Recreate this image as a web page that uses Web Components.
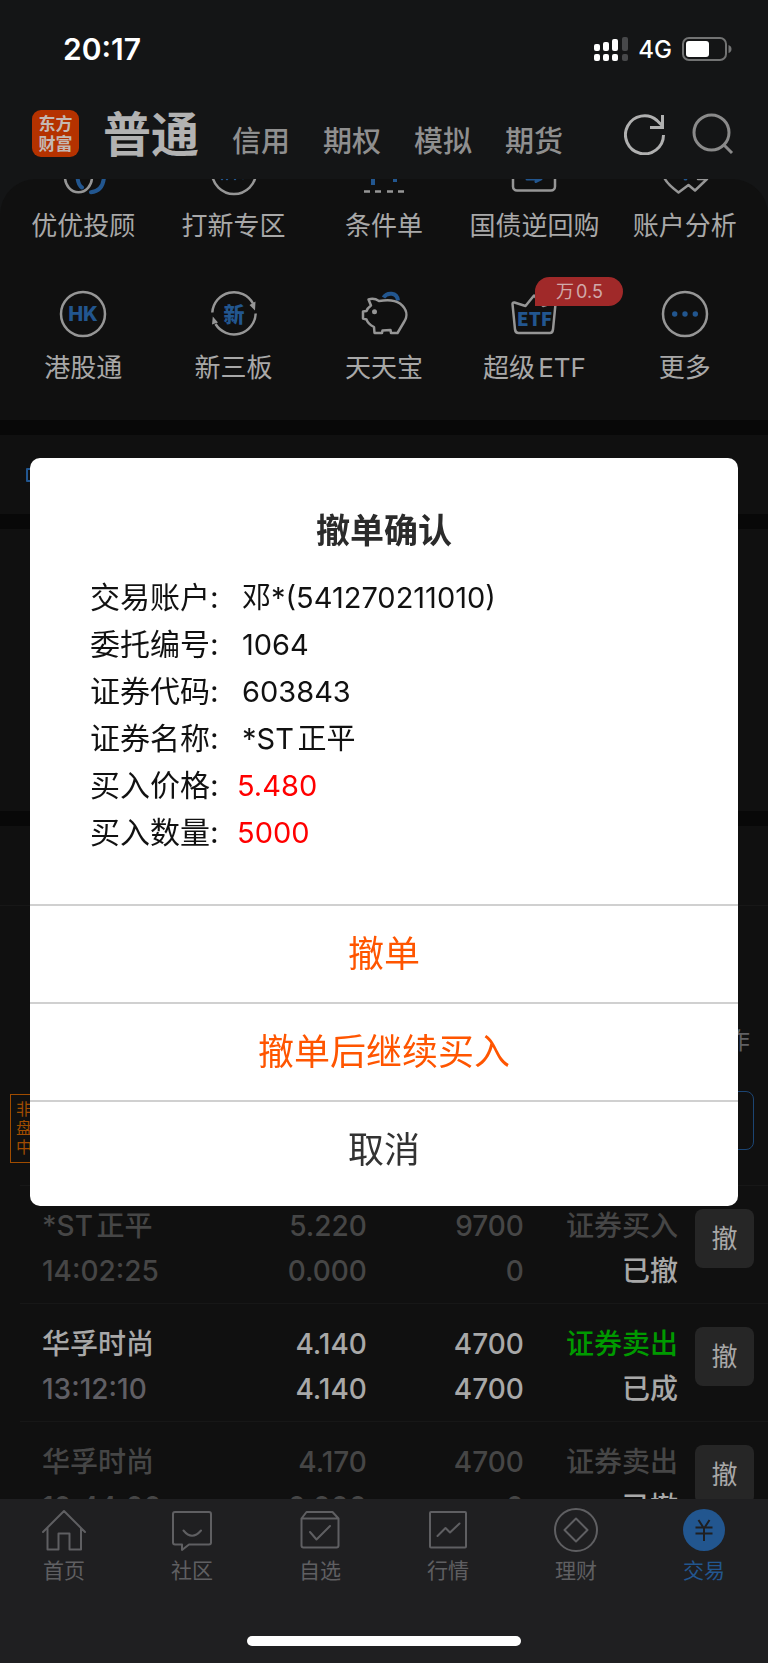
<!DOCTYPE html>
<html lang="zh-CN">
<head>
    <meta charset="UTF-8">
    <meta name="viewport" content="width=device-width, initial-scale=1.0">
    <title>撤单确认</title>
    <style>
        html, body {
            margin: 0;
            height: 100%;
            background: #101010;
        }
        body {
            font-family: Inter, "Noto Sans CJK SC", sans-serif;
            text-autospace: normal;
            --blue: #22568f;
            --text: #a8a8a8;
            --dim: #464646;
            --orange: #ff5500;
        }
        svg {
            display: block;
            fill: none;
            stroke: currentColor;
            stroke-width: 2;
            stroke-linecap: round;
            stroke-linejoin: round;
        }
        entry-item svg {
            stroke-width: 2.5;
            overflow: visible;
        }
        svg .blue {
            stroke: var(--blue);
        }
        svg .dot, svg text {
            fill: var(--blue);
            stroke: none;
        }
        svg .tip {
            fill: currentColor;
            stroke: none;
        }
    </style>
</head>
<body>
    <template id="app-shell-tpl">
        <style>
            :host {
                display: flex;
                flex-direction: column;
                height: 100vh;
                background: #141516;
            }
            main {
                flex: 1;
                min-height: 0;
                overflow: hidden;
                border-radius: 36px 36px 0 0;
                background: #101010;
            }
        </style>
        <slot name="top"></slot>
        <main><slot></slot></main>
        <slot name="bottom"></slot>
    </template>

    <template id="status-bar-tpl">
        <style>
            :host {
                display: flex;
                align-items: center;
                justify-content: space-between;
                box-sizing: border-box;
                height: 88px;
                padding: 10px 36px 0 63px;
                color: #fff;
            }
            time {
                font-size: 30px;
                font-weight: 600;
            }
            .right {
                display: flex;
                align-items: center;
                gap: 10px;
                font-size: 24px;
                font-weight: 500;
            }
            svg {
                display: block;
            }
        </style>
        <time>20:17</time>
        <div class="right">
            <svg width="34" height="24" fill="#fff">
                <rect x="0" y="7" width="6" height="7" rx="2"/>
                <rect x="9" y="5" width="6" height="9" rx="2"/>
                <rect x="18" y="2" width="6" height="12" rx="2"/>
                <rect x="28" y="0" width="6" height="14" rx="2" fill="#47484a"/>
                <rect x="0" y="17" width="6" height="7" rx="2"/>
                <rect x="9" y="17" width="6" height="7" rx="2"/>
                <rect x="18" y="17" width="6" height="7" rx="2"/>
                <rect x="28" y="17" width="6" height="7" rx="2" fill="#47484a"/>
            </svg>
            <span>4G</span>
            <svg width="50" height="24">
                <rect x="1" y="1" width="43" height="22" rx="6" fill="none" stroke="#727373" stroke-width="2"/>
                <rect x="4" y="4" width="23" height="16" rx="3" fill="#fff"/>
                <path d="M46.500 8q3 1 3 4t-3 4z" fill="#727373"/>
            </svg>
        </div>
    </template>

    <template id="app-header-tpl">
        <style>
            :host {
                display: flex;
                align-items: center;
                height: 91px;
                padding: 0 34px 0 32px;
                color: #8f8f8f;
            }
            .logo {
                display: grid;
                place-content: center;
                width: 47px;
                height: 47px;
                border-radius: 9px;
                background: #b53200;
                color: #c4b8b3;
                font-size: 17px;
                font-weight: 700;
                line-height: 20px;
            }
            nav {
                display: flex;
                align-items: baseline;
                flex: 1;
                gap: 33px;
                margin-left: 24px;
                padding-top: 9px;
                line-height: 60px;
            }
            a {
                color: inherit;
                font-size: 29px;
                font-weight: 500;
                text-decoration: none;
            }
            a.current {
                color: #b2b2b2;
                font-size: 48px;
                font-weight: 600;
            }
            .tools {
                display: flex;
                gap: 26px;
            }
            button {
                padding: 0;
                border: 0;
                background: none;
                color: #8a8a8a;
            }
            button.bright {
                color: #b0b0b0;
            }
            svg {
                display: block;
                fill: none;
                stroke: currentColor;
                stroke-width: 3;
            }
        </style>
        <div class="logo"><span>东方</span><span>财富</span></div>
        <nav>
            <a class="current" href="#normal">普通</a>
            <a href="#credit">信用</a>
            <a href="#option">期权</a>
            <a href="#mock">模拟</a>
            <a href="#futures">期货</a>
        </nav>
        <div class="tools">
            <button class="bright" type="button" aria-label="刷新">
                <svg width="42" height="42" viewBox="0 0 42 42"><path d="M39.500 22A19 19 0 1 1 33 7.500L38.500 13M38.500 2V14.500H26"/></svg>
            </button>
            <button type="button" aria-label="搜索">
                <svg width="42" height="42" viewBox="0 0 42 42"><circle cx="19.500" cy="19.500" r="17.500"/><path d="M31.500 31.500 40 40"/></svg>
            </button>
        </div>
    </template>

    <template id="entry-grid-tpl">
        <style>
            :host {
                display: grid;
                grid-template-columns: repeat(5, 1fr);
                row-gap: 47px;
                /* the list is scrolled a little, the first row is cut by the header */
                margin-top: -30px;
                padding: 0 8px 34px;
                color: #969696;
            }
        </style>
        <slot></slot>
    </template>

    <template id="entry-item-tpl">
        <style>
            :host {
                display: block;
                min-width: 0;
            }
            a {
                display: flex;
                flex-direction: column;
                align-items: center;
                gap: 13px;
                color: inherit;
                text-decoration: none;
            }
            .icon {
                position: relative;
            }
            .label {
                color: var(--text);
                font-size: 26px;
                line-height: 36px;
                white-space: nowrap;
            }
            ::slotted([slot="badge"]) {
                position: absolute;
                left: 24px;
                top: -14px;
                width: 88px;
                border-radius: 15px 15px 15px 0;
                background: #a02929;
                color: #d0a9a9;
                font-size: 18px;
                line-height: 29px;
                text-align: center;
            }
        </style>
        <a href="#entry">
            <span class="icon"><slot name="icon"></slot><slot name="badge"></slot></span>
            <span class="label"><slot></slot></span>
        </a>
    </template>

    <template id="page-block-tpl">
        <style>
            :host {
                display: block;
                box-sizing: border-box;
                border-top: 15px solid #080808;
                color: var(--blue);
            }
            :host([size="bar"]) {
                min-height: 94px;
                padding: 33px 26px 0;
            }
            :host([size="large"]) {
                min-height: 297px;
            }
        </style>
        <slot></slot>
    </template>

    <template id="order-table-tpl">
        <style>
            :host {
                display: block;
                padding: 108px 0 0 20px;
                border-top: 1px solid #171717;
            }
            table {
                width: 100%;
                border-collapse: collapse;
                table-layout: fixed;
                color: var(--dim);
                font-size: 28px;
                font-weight: 500;
                line-height: 45px;
            }
            th {
                padding: 0 18px 0 0;
                color: #606063;
                font-size: 24px;
                font-weight: 400;
                line-height: 54px;
                text-align: right;
            }
            td {
                height: 90px;
                padding: 18px 0 9px;
                border-bottom: 1px solid #171717;
                text-align: right;
                vertical-align: top;
                white-space: nowrap;
            }
            td:first-child {
                position: relative;
                padding-left: 22px;
                text-align: left;
            }
            td:last-child {
                padding: 23px 14px 0 0;
            }
            .c-num { width: 157px; }
            .c-act { width: 154px; }
            .c-btn { width: 90px; }
            .state, .done {
                color: var(--text);
            }
            .done .time {
                color: #605f65;
            }
            .done .side {
                color: #009a00;
            }
            button {
                width: 59px;
                height: 59px;
                padding: 0;
                border: 0;
                border-radius: 8px;
                background: #262626;
                color: var(--text);
                font: 400 26px/59px Inter, "Noto Sans CJK SC", sans-serif;
                vertical-align: top;
            }
            button.outline {
                border: 1px solid #1c4573;
                background: none;
            }
            .tag {
                position: absolute;
                left: -10px;
                top: 26px;
                width: 16px;
                padding: 5px;
                border: 1px solid #a04c00;
                color: #a04c00;
                font-size: 16px;
                font-weight: 400;
                line-height: 19px;
                white-space: normal;
            }
        </style>
        <table>
            <colgroup><col><col class="c-num"><col class="c-num"><col class="c-act"><col class="c-btn"></colgroup>
            <thead><tr><th colspan="5" scope="col">操作</th></tr></thead>
            <tbody>
                <tr>
                    <td><span class="tag">非盘中</span></td><td></td><td></td><td></td>
                    <td><button class="outline" type="button" aria-label="操作"></button></td>
                </tr>
            </tbody>
        </table>
    </template>

    <template id="tab-bar-tpl">
        <style>
            :host {
                display: block;
                padding-bottom: 17px;
                background: #1f1f21;
                color: #5f5f62;
            }
            nav {
                display: grid;
                grid-template-columns: repeat(6, 1fr);
                padding: 9px 0 52px;
            }
            .home {
                width: 274px;
                height: 10px;
                margin: 0 auto;
                border-radius: 5px;
                background: #fff;
            }
        </style>
        <nav><slot></slot></nav>
        <div class="home"></div>
    </template>

    <template id="tab-item-tpl">
        <style>
            :host {
                display: block;
            }
            a {
                display: flex;
                flex-direction: column;
                align-items: center;
                gap: 6px;
                color: inherit;
                font-size: 21px;
                line-height: 26px;
                text-decoration: none;
            }
            :host([active]) a {
                color: var(--blue);
            }
        </style>
        <a href="#tab"><slot name="icon"></slot><span><slot></slot></span></a>
    </template>

    <template id="confirm-dialog-tpl">
        <style>
            :host {
                position: fixed;
                inset: 0;
                display: flex;
                align-items: center;
                padding: 0 30px;
            }
            section {
                flex: 1;
                overflow: hidden;
                border-radius: 10px;
                background: #fff;
            }
            h1 {
                margin: 0;
                padding: 49px 0 19px;
                color: #2b2b2b;
                font-size: 34px;
                font-weight: 600;
                line-height: 48px;
                text-align: center;
            }
            dl {
                margin: 0;
                padding: 0 60px 48px;
                color: #111;
                line-height: 47px;
            }
            .row {
                display: flex;
                align-items: baseline;
            }
            dt {
                width: 152px;
                font-size: 30px;
                text-autospace: no-autospace;
            }
            dd {
                margin: 0;
                font-size: 29px;
            }
            .hot dt {
                width: 147px;
            }
            .hot dd {
                color: #ff0000;
            }
            button {
                display: block;
                width: 100%;
                padding: 24px 0;
                border: 0;
                border-top: 2px solid #d0d0d0;
                background: none;
                color: var(--orange);
                font: 400 36px/48px Inter, "Noto Sans CJK SC", sans-serif;
            }
            button.cancel {
                padding-bottom: 32px;
                color: #333;
            }
        </style>
        <section role="dialog" aria-labelledby="title">
            <h1 id="title">撤单确认</h1>
            <dl></dl>
            <button type="button">撤单</button>
            <button type="button">撤单后继续买入</button>
            <button class="cancel" type="button">取消</button>
        </section>
    </template>

    <app-shell>
        <status-bar slot="top"></status-bar>
        <app-header slot="top"></app-header>

        <entry-grid>
            <entry-item>
                <svg slot="icon" width="46" height="46"><path class="blue" stroke-width="4" d="M17.500 28Q18 36 22 38.500M31 43.200Q43 42 44 28"/><ellipse cx="18.500" cy="28" rx="13.500" ry="15.300"/></svg>
                优优投顾
            </entry-item>
            <entry-item>
                <svg slot="icon" width="46" height="46"><circle cx="23" cy="23" r="22"/><path class="blue" d="M11 24V30M16 24V30M24 24V30M32 24V29"/></svg>
                打新专区
            </entry-item>
            <entry-item>
                <svg slot="icon" width="46" height="46"><path class="blue" stroke-width="4" stroke-linecap="butt" d="M12 20V36M34 20V33"/><path stroke-linecap="butt" d="M3 42.500H9M14 42.500H20M26 42.500H32M37 42.500H43"/></svg>
                条件单
            </entry-item>
            <entry-item>
                <svg slot="icon" width="46" height="46"><rect x="2" y="6" width="42" height="35.500" rx="4"/><path class="blue" stroke-width="3" d="M16 30H30L25 32.500"/></svg>
                国债逆回购
            </entry-item>
            <entry-item>
                <svg slot="icon" width="46" height="46"><path d="M2 28Q4 34 16.500 43.500L26.500 36 33 41.500 45 30H36"/><circle class="dot" cx="23.500" cy="29.500" r="2"/></svg>
                账户分析
            </entry-item>

            <entry-item>
                <svg slot="icon" width="46" height="46"><circle cx="23" cy="23" r="22"/><text x="23" y="30" text-anchor="middle" font-size="20" font-weight="800">HK</text></svg>
                港股通
            </entry-item>
            <entry-item>
                <svg slot="icon" width="46" height="46"><path stroke-linecap="butt" d="M1.300 21.500A21.700 21.700 0 0 1 42 12.500M44.700 22.500A21.700 21.700 0 0 1 4.500 33"/><path class="tip" d="M44 19.500 38.500 14 44.500 10.500ZM1.800 25.500 7 31.500 1 33.500Z"/><text x="23" y="31" text-anchor="middle" font-size="21" font-weight="900">新</text></svg>
                新三板
            </entry-item>
            <entry-item>
                <svg slot="icon" width="46" height="46"><path class="blue" stroke-width="4" stroke-linecap="butt" d="M22.500 6.500C26 1 36 1 37 9.500"/><path d="M7.500 8.500C12 7 15 8 18 10 26 8.500 34 9 39 12.500 46 18 47 25 43 31L36.500 42H30L29.500 39 21.500 39.500 21 42H13.500L13 36C9 34 6.500 32 5.500 28.500L2 27.500V20.500L5.500 20C6.500 17 8 16 10 14.500Z"/><circle class="tip" cx="13.500" cy="20.700" r="2.500"/></svg>
                天天宝
            </entry-item>
            <entry-item>
                <svg slot="icon" width="46" height="46"><path d="M4 38.500 1.500 13Q1.500 11 3.500 11.500L14.500 15 23 4.500 32 15 43 11.500Q45 11 44.500 13L42 38.500Q41.500 42 39 42H7.500Q4.500 42 4 38.500Z"/><text x="23.500" y="34.500" text-anchor="middle" font-family="Noto Sans CJK SC" font-size="19" font-weight="900">ETF</text></svg>
                <span slot="badge">万0.5</span>
                超级ETF
            </entry-item>
            <entry-item>
                <svg slot="icon" width="46" height="46"><circle cx="23" cy="23" r="22"/><circle class="dot" cx="12.700" cy="23" r="2.700"/><circle class="dot" cx="23" cy="23" r="2.700"/><circle class="dot" cx="33.300" cy="23" r="2.700"/></svg>
                更多
            </entry-item>
        </entry-grid>

        <page-block size="bar">
            <svg width="24" height="14"><path d="M1 1H22V13H1Z"/></svg>
        </page-block>
        <page-block size="large"></page-block>
        <page-block size="bar"></page-block>
        <order-table></order-table>

        <tab-bar slot="bottom">
            <tab-item>
                <svg slot="icon" width="44" height="44"><path d="M1 24 22 3 43 24M5.500 20V41.500H16.500V25.500H27.500V41.500H39V20"/></svg>
                首页
            </tab-item>
            <tab-item>
                <svg slot="icon" width="44" height="44"><path d="M5 4H39Q41 4 41 6V34.500Q41 36.500 39 36.500H19L12 42V36.500H5Q3 36.500 3 34.500V6Q3 4 5 4ZM13.500 22.500Q22 33 31 22.500"/></svg>
                社区
            </tab-item>
            <tab-item>
                <svg slot="icon" width="44" height="44"><path d="M3.500 10.500 8.500 4H34.500L40.500 10.500V37.500Q40.500 39.500 38.500 39.500H5.500Q3.500 39.500 3.500 37.500V10.500H40.500M12 24 18.500 31.500 32 18"/></svg>
                自选
            </tab-item>
            <tab-item>
                <svg slot="icon" width="44" height="44"><rect x="4" y="4" width="36" height="35.500" rx="1"/><path d="M11.500 28 19.500 20 24 24.500 33.500 15.500"/></svg>
                行情
            </tab-item>
            <tab-item>
                <svg slot="icon" width="44" height="44"><circle cx="22" cy="22" r="21"/><path d="M22 10.500 33.500 22 22 33.500 10.500 22Z"/></svg>
                理财
            </tab-item>
            <tab-item active>
                <svg slot="icon" width="44" height="44"><circle class="dot" cx="22" cy="22" r="21"/><path stroke="#1f1f21" stroke-linecap="butt" d="M16.500 12 22 20.500 27.500 12M22 20V33M13.500 19.500H30.500M13.500 25.500H30.500"/></svg>
                交易
            </tab-item>
        </tab-bar>
    </app-shell>
    <confirm-dialog></confirm-dialog>

    <script>
        const orders = [
            { name: '*ST正平', time: '14:02:25', price: '5.220', avg: '0.000', qty: '9700', filled: '0', side: '证券买入', state: '已撤' },
            { name: '华孚时尚', time: '13:12:10', price: '4.140', avg: '4.140', qty: '4700', filled: '4700', side: '证券卖出', state: '已成', done: true },
            { name: '华孚时尚', time: '10:44:00', price: '4.170', avg: '0.000', qty: '4700', filled: '0', side: '证券卖出', state: '已撤' }
        ];

        const details = [
            ['交易账户:', '邓*(541270211010)'],
            ['委托编号:', '1064'],
            ['证券代码:', '603843'],
            ['证券名称:', '*ST正平'],
            ['买入价格:', '5.480', true],
            ['买入数量:', '5000', true]
        ];

        class BaseElement extends HTMLElement {
            constructor() {
                super();
                this.attachShadow({mode: 'open'});
                const template = document.getElementById(this.localName + '-tpl');
                this.shadowRoot.appendChild(document.importNode(template.content, true));
            }
        }

        class OrderTable extends BaseElement {
            constructor() {
                super();
                const body = this.shadowRoot.querySelector('tbody');
                orders.forEach((o) => {
                    const row = document.createElement('tr');
                    if (o.done) {
                        row.className = 'done';
                    }
                    row.innerHTML = `
                        <td>${o.name}<br><span class="time">${o.time}</span></td>
                        <td>${o.price}<br>${o.avg}</td>
                        <td>${o.qty}<br>${o.filled}</td>
                        <td><span class="side">${o.side}</span><br><span class="state">${o.state}</span></td>
                        <td><button type="button">撤</button></td>`;
                    body.appendChild(row);
                });
            }
        }

        class ConfirmDialog extends BaseElement {
            constructor() {
                super();
                const list = this.shadowRoot.querySelector('dl');
                details.forEach(([label, value, hot]) => {
                    const row = document.createElement('div');
                    row.className = hot ? 'row hot' : 'row';
                    row.innerHTML = `<dt>${label}</dt><dd>${value}</dd>`;
                    list.appendChild(row);
                });
            }
        }

        ['app-shell', 'status-bar', 'app-header', 'entry-grid', 'entry-item', 'page-block', 'tab-bar', 'tab-item'].forEach((name) => {
            customElements.define(name, class extends BaseElement {});
        });
        customElements.define('order-table', OrderTable);
        customElements.define('confirm-dialog', ConfirmDialog);
    </script>
</body>
</html>
